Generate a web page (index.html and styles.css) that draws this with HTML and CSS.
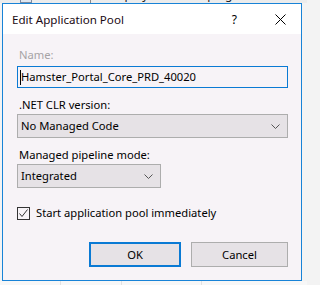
FILE: index.html
```html
<!DOCTYPE html>
<html>
<head>
<meta charset="utf-8">
<link rel="stylesheet" href="styles.css">
</head>
<body>
<div class="top-strip">
  <span class="tool-icon"></span>
  <span class="strip-text">Show All</span>
  <span class="strip-sep"></span>
  <span class="strip-text">Group by:</span>
  <span class="strip-text">No Grouping</span>
</div>
<div class="window">
  <div class="titlebar">
    <span class="title">Edit Application Pool</span>
    <span class="help">?</span>
    <svg class="close" width="11" height="11" viewBox="0 0 11 11"><path d="M0.5 0.5 L10.5 10.5 M10.5 0.5 L0.5 10.5" stroke="#000" stroke-width="1" fill="none"/></svg>
  </div>
  <div class="content">
    <div class="lbl disabled">Name:</div>
    <div class="textbox"><span class="caret"></span>Hamster_Portal_Core_PRD_40020</div>
    <div class="lbl lbl-gap">.NET CLR version:</div>
    <div class="select select-wide"><span>No Managed Code</span><svg class="chev" width="9" height="5" viewBox="0 0 9 5"><path d="M0.5 0.5 L4.5 4.5 L8.5 0.5" stroke="#555" stroke-width="1" fill="none"/></svg></div>
    <div class="lbl lbl-gap">Managed pipeline mode:</div>
    <div class="select select-narrow"><span>Integrated</span><svg class="chev" width="9" height="5" viewBox="0 0 9 5"><path d="M0.5 0.5 L4.5 4.5 L8.5 0.5" stroke="#555" stroke-width="1" fill="none"/></svg></div>
    <div class="check">
      <span class="box"><svg width="11" height="11" viewBox="0 0 11 11"><path d="M1.5 5.5 L4 8.5 L9.5 1.5" stroke="#333" stroke-width="1" fill="none"/></svg></span>
      <span>Start application pool immediately</span>
    </div>
    <div class="buttons">
      <div class="btn btn-default">OK</div>
      <div class="btn btn-cancel">Cancel</div>
    </div>
  </div>
</div>
<div class="below">
  <span class="cell c1"></span>
  <span class="cell c2"></span>
  <span class="cell c3"></span>
  <span class="cell c4"></span>
</div>
</body>
</html>
```
FILE: styles.css
```css
html, body {
  margin: 0;
  padding: 0;
}
body {
  background: #f3f3f3;
  font-family: "Noto Sans", "Open Sans", sans-serif;
  font-size: 11.2px;
  color: #000;
  width: 307px;
  height: 285px;
  overflow: hidden;
}
.top-strip {
  height: 3px;
  overflow: hidden;
  display: flex;
  align-items: flex-start;
  background: #ececec;
  padding-left: 20px;
}
.top-strip > * {
  margin-top: -13px;
  line-height: 16px;
  flex: none;
}
.tool-icon {
  width: 12px;
  height: 16px;
  border: 1px solid #7a8aa0;
  box-sizing: border-box;
  background: #dfe6ef;
  margin-right: 3px;
}
.strip-text {
  color: #222;
  margin-right: 8px;
  font-size: 12px;
}
.strip-sep {
  width: 1px;
  height: 16px;
  background: #888;
  margin-right: 5px;
}
.window {
  margin-left: 2px;
  width: 300px;
  height: 278px;
  box-sizing: border-box;
  border: 1px solid #1883d7;
  background: #f7f3f7;
  display: flex;
  flex-direction: column;
}
.titlebar {
  height: 30px;
  background: #fff;
  display: flex;
  align-items: center;
  flex: none;
}
.title {
  margin-left: 9px;
  font-size: 11.6px;
  color: #1a0a14;
  flex: 1;
}
.help {
  font-size: 12px;
  margin-right: 38px;
  color: #000;
}
.close {
  margin-right: 15px;
}
.content {
  padding: 13px 13px 0 14px;
  display: flex;
  flex-direction: column;
  align-items: flex-start;
}
.lbl {
  line-height: 16px;
  margin-left: 2px;
}
.lbl.disabled {
  color: #a6a3a6;
}
.lbl-gap {
  margin-top: 9px;
}
.textbox {
  margin-top: 3px;
  width: 271px;
  height: 22px;
  box-sizing: border-box;
  border: 1px solid #0a7ad4;
  display: flex;
  align-items: center;
  padding-left: 2px;
  line-height: 16px;
  background: #f7f3f7;
}
.caret {
  width: 1px;
  height: 15px;
  background: #000;
}
.select {
  margin-top: 1px;
  height: 24px;
  box-sizing: border-box;
  border: 1px solid #adadad;
  background: #e6e2e6;
  display: flex;
  align-items: center;
  justify-content: space-between;
  padding: 0 7px 0 3px;
  line-height: 16px;
}
.select-wide {
  width: 271px;
}
.select-narrow {
  width: 144px;
}
.chev {
  flex: none;
}
.check {
  margin-top: 17px;
  display: flex;
  align-items: center;
  line-height: 16px;
}
.box {
  width: 13px;
  height: 13px;
  box-sizing: border-box;
  border: 1px solid #333;
  display: flex;
  align-items: center;
  justify-content: center;
  margin-right: 6px;
}
.box svg {
  display: block;
}
.buttons {
  margin-top: 21px;
  align-self: stretch;
  display: flex;
  justify-content: flex-end;
  gap: 10px;
}
.btn {
  height: 25px;
  box-sizing: border-box;
  border: 1px solid #adadad;
  background: #e6e2e6;
  display: flex;
  align-items: center;
  justify-content: center;
  line-height: 16px;
}
.btn-default {
  width: 92px;
  border: 2px solid #0a7ad4;
}
.btn-cancel {
  width: 97px;
}
.below {
  display: flex;
  height: 4px;
  background: #f7f7f7;
}
.cell {
  height: 4px;
  border-right: 1px solid #e2e2e2;
}
.c1 { width: 60px; }
.c2 { width: 60px; }
.c3 { width: 79px; }
.c4 { width: 60px; border-right: none; }
```
